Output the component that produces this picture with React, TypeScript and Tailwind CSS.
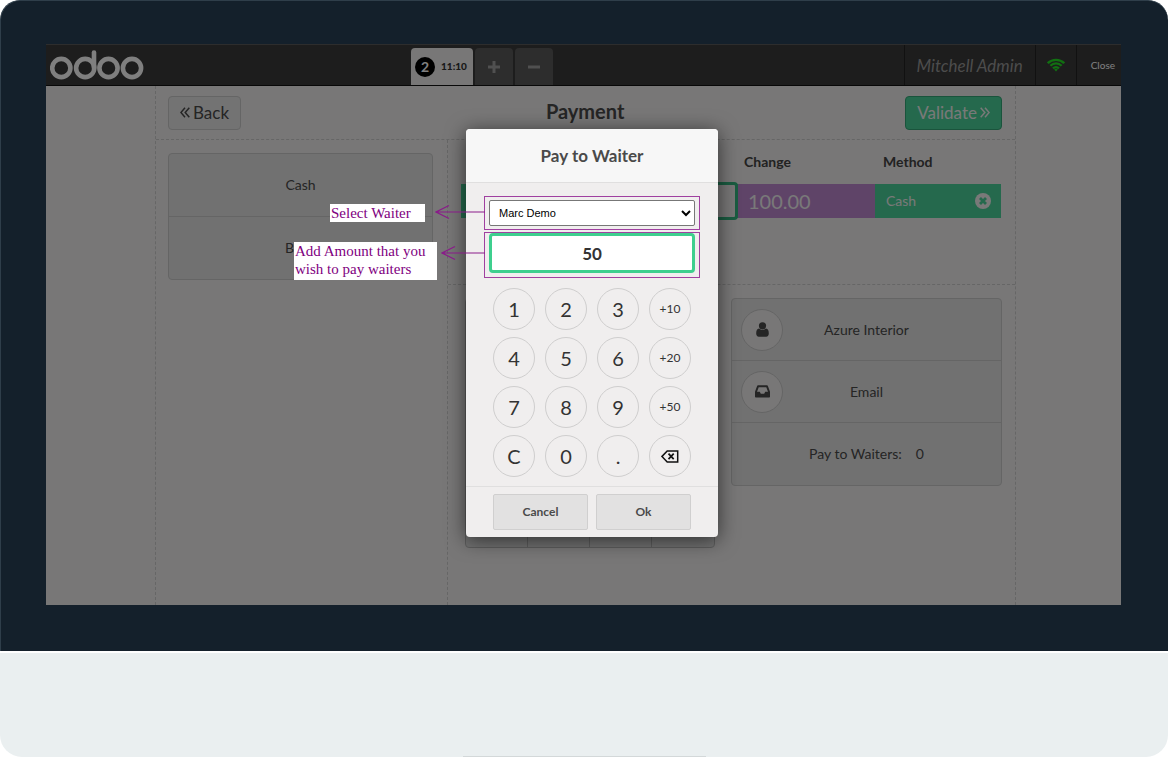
import { useState } from "react";
import type { ReactNode } from "react";

const KEYS = [
  "1", "2", "3", "+10",
  "4", "5", "6", "+20",
  "7", "8", "9", "+50",
  "C", "0", ".", "back",
] as const;
const WAITERS = ["Marc Demo", "Mitchell Admin"];

const lato = "font-['Lato',sans-serif]";

function OdooLogo() {
  return (
    <svg width="94" height="31" viewBox="0 0 94 31" fill="none" stroke="#fff" strokeWidth="4.6" aria-label="odoo">
      <circle cx="11.3" cy="18" r="9.1" />
      <circle cx="35.2" cy="18" r="9.1" />
      <circle cx="58.5" cy="18" r="9.1" />
      <circle cx="82" cy="18" r="9.1" />
      <path d="M44 2.5V18" strokeLinecap="round" />
    </svg>
  );
}

function WifiIcon() {
  return (
    <svg width="18" height="14" viewBox="0 0 18 14" fill="none" stroke="#22e022" strokeWidth="2.3" aria-hidden>
      <path d="M0.8 5.2a11.6 11.6 0 0 1 16.4 0" />
      <path d="M3.4 7.8a7.9 7.9 0 0 1 11.2 0" />
      <path d="M6 10.4a4.3 4.3 0 0 1 6 0" />
      <path d="M7.2 11.6a2.6 2.6 0 0 1 3.6 0L9 13.5z" fill="#22e022" stroke="none" />
    </svg>
  );
}

function ChevronsIcon({ flip = false }: { flip?: boolean }) {
  return (
    <svg
      className={flip ? "-scale-x-100" : ""}
      width="10"
      height="11"
      viewBox="0 0 10 11"
      fill="none"
      stroke="currentColor"
      strokeWidth="1.5"
      aria-hidden
    >
      <path d="M5 0.8L0.9 5.5L5 10.2M9.3 0.8L5.2 5.5L9.3 10.2" />
    </svg>
  );
}

function UserIcon() {
  return (
    <svg width="13" height="15" viewBox="0 0 13 15" fill="currentColor" aria-hidden>
      <circle cx="6.5" cy="3.8" r="3.6" />
      <path d="M3 6.6C1 6.9 0.2 8.8 0.2 11.6c0 1.9 1 3.2 2.6 3.2h7.4c1.6 0 2.6-1.3 2.6-3.2 0-2.8-.8-4.7-2.8-5-1 .9-2.1 1.5-3.5 1.5S4 7.5 3 6.6z" />
    </svg>
  );
}

function InboxIcon() {
  return (
    <svg width="15" height="13" viewBox="0 0 15 13" fill="currentColor" aria-hidden>
      <path
        fillRule="evenodd"
        d="M3 0.3h9c.4 0 .7.2.9.6L15 6.8v5c0 .5-.3.8-.8.8H.8c-.5 0-.8-.3-.8-.8v-5L2.1.9C2.3.5 2.6.3 3 .3zM3.7 2.2L2 6.8h2.8l1 2h3.4l1-2H13l-1.7-4.6z"
      />
    </svg>
  );
}

function BackspaceIcon() {
  return (
    <svg width="18" height="13" viewBox="0 0 18 13" fill="none" stroke="#111" strokeWidth="1.5" aria-label="Backspace">
      <path d="M6.2 0.9H16.7V11.9H6.2L1 6.4z" />
      <path d="M7.5 3.6l5.2 5.6M12.7 3.6L7.5 9.2" strokeWidth="1.7" />
    </svg>
  );
}

function RemoveIcon() {
  return (
    <svg width="16" height="16" viewBox="0 0 16 16" aria-label="Remove">
      <circle cx="8" cy="8" r="8" fill="#f2f2f2" />
      <path d="M5 5l6 6M11 5l-6 6" stroke="#4bd29a" strokeWidth="2.8" />
    </svg>
  );
}

function Arrow({ width, className = "" }: { width: number; className?: string }) {
  return (
    <svg
      className={`shrink-0 ${className}`}
      width={width}
      height="16"
      fill="none"
      stroke="#8a1a8a"
      strokeWidth="1.2"
      aria-hidden
    >
      <path d={`M1 8H${width}M14 1.5L1 8L14 14.5`} />
    </svg>
  );
}

function NoteText({ className, children }: { className: string; children: ReactNode }) {
  return (
    <p
      className={`bg-white pl-px font-['Liberation_Serif',serif] text-[15px] leading-[18px] text-[#800080] ${className}`}
    >
      {children}
    </p>
  );
}

function TopBar() {
  return (
    <header className="flex h-[42px] items-stretch border-t border-b border-t-[#5a5a5a] border-b-[#111] bg-[#3a3a3a]">
      <div className="flex flex-1 items-start pl-1 pt-[5px]">
        <OdooLogo />
      </div>
      <nav className="flex items-stretch gap-0.5 pt-[3px]">
        <button type="button" className="flex w-[62px] items-center gap-1.5 rounded-t-sm bg-[#f0eeee] pl-1">
          <span className="flex size-5 items-center justify-center rounded-full bg-black text-sm font-bold text-white">2</span>
          <span className="text-[10px] font-black text-[#333]">11:10</span>
        </button>
        <button type="button" aria-label="New order" className="flex w-[38px] items-center justify-center rounded-t-sm bg-[#5a5a5a]">
          <svg width="12" height="12" stroke="#a0a0a0" strokeWidth="3" aria-hidden>
            <path d="M6 0V12M0 6H12" />
          </svg>
        </button>
        <button type="button" aria-label="Delete order" className="flex w-[38px] items-center justify-center rounded-t-sm bg-[#5a5a5a]">
          <svg width="12" height="12" stroke="#a0a0a0" strokeWidth="3" aria-hidden>
            <path d="M0 6H12" />
          </svg>
        </button>
      </nav>
      <div className="flex flex-[1.573] items-stretch justify-end">
        <span className="flex items-center border-l border-[#222] px-3 pt-0.5 text-[17px] italic text-[#999]">
          Mitchell Admin
        </span>
        <span className="flex w-[41px] items-center justify-center border-l border-[#222]">
          <WifiIcon />
        </span>
        <button type="button" className="flex items-center border-l border-[#222] pl-3.5 pr-1.5 text-[10px] text-white">
          Close
        </button>
      </div>
    </header>
  );
}

function PaymentLines() {
  return (
    <section className="h-[145px] border-b border-dashed border-[#ccc] pl-[13px] pr-3.5">
      <table className="w-full table-fixed text-left">
        <thead>
          <tr className="h-11 text-sm font-bold text-[#444]">
            <th aria-label="Due and tendered" />
            <th className="w-[137px] pl-1.5">Change</th>
            <th className="w-[126px] pl-2">Method</th>
          </tr>
        </thead>
        <tbody>
          <tr className="h-[34px]">
            <td className="bg-[#4bd29a] p-0">
              <div className="relative ml-auto -my-0.5 h-[38px] w-1/2 rounded border-3 border-[#35b883] bg-[#f0eeee]" />
            </td>
            <td className="bg-[#be88d0] py-0 pl-2.5 text-xl text-[#f2f2f2]">100.00</td>
            <td className="bg-[#4bd29a] py-0 pl-[11px] pr-2.5 text-sm text-[#f2f2f2]">
              <span className="flex items-center justify-between">
                Cash
                <RemoveIcon />
              </span>
            </td>
          </tr>
        </tbody>
      </table>
    </section>
  );
}

const infoRow = "flex h-[62px] w-full items-center justify-center border-b border-[#cacaca] last:border-b-0";
const infoIcon =
  "absolute left-[9px] flex size-[42px] items-center justify-center rounded-full border border-[#cacaca] bg-[#f0eeee]";

function PaymentScreen() {
  return (
    <div className="flex flex-1 bg-[#f0eeee] pl-[109px] pr-[105px] text-[#4a4a4a]">
      <div className="flex flex-1 flex-col border-x border-dashed border-[#ccc]">
        <div className="flex h-[54px] items-center justify-between border-b border-dashed border-[#ccc] pl-3 pr-[13px]">
          <div className="w-[97px]">
            <button
              type="button"
              className="flex h-[34px] items-center gap-[3px] rounded-sm border border-[#cacaca] bg-[#e6e6e6] px-[11px] text-[17px]"
            >
              <ChevronsIcon />
              Back
            </button>
          </div>
          <h1 className="pb-1 text-xl font-bold">Payment</h1>
          <button
            type="button"
            className="flex h-[34px] items-center gap-[3px] rounded-sm border border-[#35a878] bg-[#4bd29a] px-[11px] text-[17px] text-[#f2f2f2]"
          >
            Validate
            <ChevronsIcon flip />
          </button>
        </div>

        <div className="flex flex-1">
          <div className="w-[292px] border-r border-dashed border-[#ccc] pl-3 pr-3.5 pt-[13px]">
            <div className="rounded-sm border border-[#cacaca] bg-[#e2e2e2] text-sm">
              <button type="button" className="flex h-[63px] w-full items-center justify-center border-b border-[#cacaca]">
                Cash
              </button>
              <button type="button" className="flex h-[62px] w-full items-center justify-center">
                Bank
              </button>
            </div>
          </div>

          <div className="flex flex-1 flex-col">
            <PaymentLines />
            <div className="flex items-start gap-4 pl-[17px] pr-[13px] pt-[13px]">
              {/* Keypad */}
              <div className="grid h-[250px] w-[250px] grid-cols-4 rounded border border-[#bbb] bg-[#e2e2e2]">
                {[0, 1, 2, 3].map((col) => (
                  <div key={col} className="border-r border-[#bbb] last:border-r-0" />
                ))}
              </div>

              <div className="flex-1 rounded-sm border border-[#cacaca] bg-[#e2e2e2] text-sm">
                <button type="button" className={`relative ${infoRow}`}>
                  <span className={infoIcon}>
                    <UserIcon />
                  </span>
                  Azure Interior
                </button>
                <button type="button" className={`relative ${infoRow}`}>
                  <span className={infoIcon}>
                    <InboxIcon />
                  </span>
                  Email
                </button>
                <button type="button" className={`gap-3.5 ${infoRow}`}>
                  <span>Pay to Waiters:</span>
                  <span>0</span>
                </button>
              </div>
            </div>
          </div>
        </div>
      </div>
    </div>
  );
}

function PayToWaiterDialog() {
  const [waiter, setWaiter] = useState(WAITERS[0]);
  const [amount, setAmount] = useState("50");

  const press = (key: string) => {
    if (key === "C") setAmount("");
    else if (key === "back") setAmount(amount.slice(0, -1));
    else if (key.startsWith("+")) setAmount(String(Number(amount) + Number(key)));
    else setAmount(amount + key);
  };

  return (
    <div
      role="dialog"
      aria-label="Pay to Waiter"
      className="w-[252px] rounded-sm bg-[#f0eeee] text-[#4a4a4a] shadow-[0_3px_20px_rgba(0,0,0,0.6)]"
    >
      <h2 className="flex h-[54px] items-center justify-center rounded-t-sm border-b border-[#e0dfdf] bg-[#f7f7f7] text-[17px] font-bold">
        Pay to Waiter
      </h2>

      <div className="px-[18px] pt-[13px]">
        <div className="relative border border-[#a040a0] px-1 py-[3px]">
          <select
            aria-label="Waiter"
            value={waiter}
            onChange={(e) => setWaiter(e.target.value)}
            className="block h-[26px] w-full rounded-xs border border-[#777] bg-white pl-[5px] font-['Liberation_Sans',sans-serif] text-[11px] text-black"
          >
            {WAITERS.map((w) => (
              <option key={w}>{w}</option>
            ))}
          </select>
          <div className="absolute right-full top-[7px] flex items-start">
            <NoteText className="mr-2.5 w-[95px]">Select Waiter</NoteText>
            <Arrow width={50} />
          </div>
        </div>
        <div className="relative mt-0.5 border border-[#a040a0] px-1 pb-1">
          <input
            type="text"
            aria-label="Amount"
            value={amount}
            onChange={(e) => setAmount(e.target.value)}
            className="block h-10 w-full rounded border-3 border-[#3ecf8e] bg-white text-center text-[17px] font-bold text-[#333]"
          />
          <div className="absolute right-full top-[9px] flex items-start">
            <NoteText className="mr-1 w-[143px] pb-0.5">Add Amount that you wish to pay waiters</NoteText>
            <Arrow width={44} className="mt-[3px]" />
          </div>
        </div>
      </div>

      <div className="grid grid-cols-4 gap-x-2.5 gap-y-[7px] px-[27px] pb-[9px] pt-2.5">
        {KEYS.map((key) => (
          <button
            key={key}
            type="button"
            onClick={() => press(key)}
            className={`flex size-[42px] items-center justify-center rounded-full border border-[#cfcece] text-[#333] ${
              key.startsWith("+") ? "text-xs" : "text-xl"
            }`}
          >
            {key === "back" ? <BackspaceIcon /> : key}
          </button>
        ))}
      </div>

      <footer className="flex gap-2 border-t border-[#e0dfdf] px-[27px] py-[7px]">
        {["Cancel", "Ok"].map((label) => (
          <button
            key={label}
            type="button"
            className="h-9 flex-1 rounded-xs border border-[#d0cfcf] bg-[#e2e1e1] text-xs font-bold"
          >
            {label}
          </button>
        ))}
      </footer>
    </div>
  );
}

export default function App() {
  return (
    <div className={`flex min-h-screen flex-col bg-white ${lato}`}>
      {/* Monitor */}
      <div className="flex flex-1 flex-col rounded-t-[20px] border-l border-t border-[#2f3e4a] bg-[#14202b] pb-[46px] pl-[45px] pr-[47px] pt-[43px]">
        <main className="relative flex flex-1 flex-col">
          <TopBar />
          <PaymentScreen />
          <div className="absolute inset-0 flex items-start justify-center bg-black/50 pl-[17px] pt-[85px]">
            <PayToWaiterDialog />
          </div>
        </main>
      </div>

      {/* Stand */}
      <div className="mt-0.5 flex h-26 items-end justify-center rounded-b-[22px] bg-[#eaeff0]">
        <div className="h-px w-[243px] bg-[#d3d8d9]" />
      </div>
    </div>
  );
}
